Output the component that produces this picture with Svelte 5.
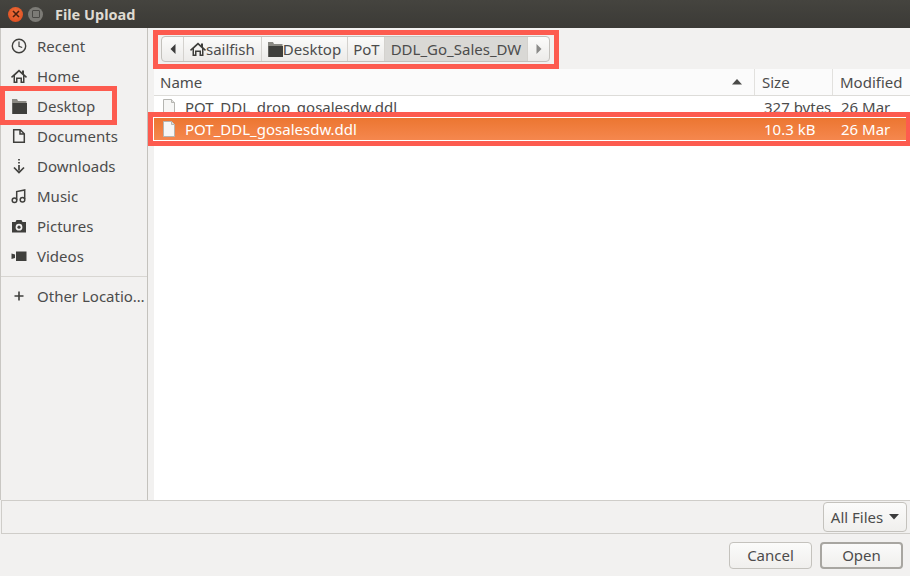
<script lang="ts">
  const places = [
    { name: 'Recent', icon: 'recent' },
    { name: 'Home', icon: 'home' },
    { name: 'Desktop', icon: 'folder' },
    { name: 'Documents', icon: 'doc' },
    { name: 'Downloads', icon: 'down' },
    { name: 'Music', icon: 'music' },
    { name: 'Pictures', icon: 'camera' },
    { name: 'Videos', icon: 'video' }
  ];
  const files = [
    { name: 'POT_DDL_drop_gosalesdw.ddl', size: '327 bytes', date: '26 Mar', selected: false },
    { name: 'POT_DDL_gosalesdw.ddl', size: '10.3 kB', date: '26 Mar', selected: true }
  ];
</script>

{#snippet glyph(icon: string)}
  <svg class="icon" width="16" height="16" viewBox="0 0 16 16">
    {#if icon === 'recent'}
      <circle cx="8" cy="8" r="6.7" fill="none" stroke="currentColor" stroke-width="1.4" />
      <path d="M8 3.500v4.800l3.200 1.200" fill="none" stroke="currentColor" stroke-width="1.2" />
    {:else if icon === 'home'}
      <path d="M8 1.500 0 8.800l1 1.100 1.500-1.300V15h4v-4h3v4h4V8.600L15 9.900l1-1.100-3-2.700V2.500h-2v1.800z M4 7.400 8 3.800l4 3.600v6.100h-1V9.500H5v4H4z" fill="currentColor" fill-rule="evenodd" />
    {:else if icon === 'folder'}
      <path d="M1 1h5l1 2h8.500v13H1z" fill="#8a8983" />
      <path d="M3 5h13v11H1.500V5z" fill="#3f3f3c" />
    {:else if icon === 'doc'}
      <path d="M2.700 1.700h6.500l4.100 4.100v8.500H2.700z M9 2v4h4" fill="none" stroke="currentColor" stroke-width="1.500" />
    {:else if icon === 'down'}
      <path d="M8 1v1.500M8 4v1.500M8 7v5.500M3 9.500 8 14.500l5-5" fill="none" stroke="currentColor" stroke-width="1.700" />
    {:else if icon === 'music'}
      <path d="M5.700 12V3.500l8-1.500v9" fill="none" stroke="currentColor" stroke-width="1.500" />
      <circle cx="3.500" cy="12.300" r="2.300" fill="none" stroke="currentColor" stroke-width="1.500" />
      <circle cx="11.500" cy="11.800" r="2.300" fill="none" stroke="currentColor" stroke-width="1.500" />
    {:else if icon === 'camera'}
      <path d="M1 4h3.500l1-2h5l1 2H15v10.500H1z M8 5.800a3.400 3.400 0 1 0 0 6.800 3.400 3.400 0 0 0 0-6.800z" fill="currentColor" fill-rule="evenodd" />
      <circle cx="8" cy="9.200" r="1.600" fill="currentColor" />
    {:else if icon === 'video'}
      <path d="M5 3.500h10.500v9.500H5z M.5 5.500l3.500 1v3.500l-3.500 1z" fill="currentColor" />
    {/if}
  </svg>
{/snippet}

{#snippet fileIcon()}
  <svg class="file-icon" width="16" height="16" viewBox="0 0 16 16">
    <path d="M2.500.5h8l3 3v12h-11z" fill="#f6f6f5" stroke="#b5b5b1" />
    <path d="M10.500.5v3h3" fill="#e2e2e0" stroke="#b5b5b1" />
  </svg>
{/snippet}

<div class="window">
  <header class="titlebar">
    <span class="btn-close">
      <svg width="8" height="8" viewBox="0 0 8 8"><path d="M1 1l6 6M7 1 1 7" stroke="#4a2010" stroke-width="1.600" /></svg>
    </span>
    <span class="btn-max"><span class="btn-max-inner"></span></span>
    <span class="title">File Upload</span>
  </header>

  <div class="main">
    <aside class="sidebar">
      <ul class="places">
        {#each places as p}
          <li class="place">
            {@render glyph(p.icon)}
            <span>{p.name}</span>
          </li>
        {/each}
      </ul>
      <div class="sep"></div>
      <div class="place other">
        <svg class="icon" width="16" height="16" viewBox="0 0 16 16"><path d="M8 3.500v9M3.500 8h9" stroke="currentColor" stroke-width="1.600" /></svg>
        <span>Other Locatio…</span>
      </div>
    </aside>

    <section class="content">
      <div class="pathbar">
        <div class="path-group">
          <span class="crumb arrow">
            <svg width="8" height="10" viewBox="0 0 8 10"><path d="M6.500 0v10L1.500 5z" fill="#3c3c3c" /></svg>
          </span>
          <span class="crumb home">
            <svg class="crumb-icon" width="16" height="16" viewBox="0 0 16 16"><path d="M8 1.500 0 8.800l1 1.100 1.500-1.300V15h4v-4h3v4h4V8.600L15 9.900l1-1.100-3-2.700V2.500h-2v1.800z M4 7.400 8 3.800l4 3.600v6.100h-1V9.500H5v4H4z" fill="#3d3d3a" fill-rule="evenodd" /></svg>sailfish
          </span>
          <span class="crumb">
            <svg class="crumb-icon" width="16" height="16" viewBox="0 0 16 16"><path d="M1 1h5l1 2h8.500v13H1z" fill="#8a8983" /><path d="M3 5h13v11H1.500V5z" fill="#3f3f3c" /></svg>Desktop
          </span>
          <span class="crumb pot">PoT</span>
          <span class="crumb active">DDL_Go_Sales_DW</span>
          <span class="crumb arrow end">
            <svg width="8" height="10" viewBox="0 0 8 10"><path d="M1.500 0v10l5-5z" fill="#8a8a88" /></svg>
          </span>
        </div>
      </div>

      <div class="list">
        <div class="list-head">
          <div class="th th-name">
            <span>Name</span>
            <svg width="10" height="6" viewBox="0 0 10 6"><path d="M5 0 10 5.500H0z" fill="#4a4a48" /></svg>
          </div>
          <div class="th th-size">Size</div>
          <div class="th th-mod">Modified</div>
        </div>
        {#each files as f}
          <div class="row" class:selected={f.selected}>
            <div class="cell-name">
              {@render fileIcon()}
              <span>{f.name}</span>
            </div>
            <div class="cell-size">{f.size}</div>
            <div class="cell-mod">{f.date}</div>
          </div>
        {/each}
      </div>
    </section>
  </div>

  <div class="filter-bar">
    <span class="button filter">All Files <svg width="10" height="6" viewBox="0 0 10 6"><path d="M0 0h10L5 5.500z" fill="#3c3c3c" /></svg></span>
  </div>

  <div class="actions">
    <span class="button">Cancel</span>
    <span class="button open">Open</span>
  </div>

  <div class="mark mark-desktop"></div>
  <div class="mark mark-path"></div>
  <div class="mark mark-file"></div>
</div>

<style>
  :global(body) {
    margin: 0;
    background: #f2f1f0;
  }

  .window {
    position: relative;
    width: 910px;
    height: 576px;
    overflow: hidden;
    display: flex;
    flex-direction: column;
    background: #f2f1f0;
    color: #4c4c4c;
    font-family: "Noto Sans", sans-serif;
    font-size: 15px;
  }

  .titlebar {
    height: 28px;
    flex: none;
    display: flex;
    align-items: center;
    padding-left: 8px;
    background: linear-gradient(#45443f, #3b3a36);
    box-sizing: border-box;
  }

  .btn-close {
    width: 15px;
    height: 15px;
    border-radius: 50%;
    background: radial-gradient(circle at 50% 40%, #f0703a, #d9471c);
    display: flex;
    align-items: center;
    justify-content: center;
  }

  .btn-max {
    width: 15px;
    height: 15px;
    margin-left: 5px;
    border-radius: 50%;
    background: #7c7b76;
    display: flex;
    align-items: center;
    justify-content: center;
  }

  .btn-max-inner {
    width: 6px;
    height: 6px;
    border: 1px solid #4b4a46;
    border-radius: 1px;
  }

  .title {
    margin-left: 12px;
    color: #dfdbd2;
    font-weight: 700;
    font-size: 14.500px;
  }

  .main {
    flex: 1;
    display: flex;
    min-height: 0;
    border-left: 1px solid #c9c7c3;
  }

  .sidebar {
    width: 146px;
    flex: none;
    border-right: 1px solid #c4c2bd;
    padding-top: 3px;
    box-sizing: content-box;
  }

  .places {
    list-style: none;
    margin: 0;
    padding: 0;
  }

  .place {
    height: 30px;
    display: flex;
    align-items: center;
    padding-left: 10px;
    white-space: nowrap;
  }

  .place .icon {
    flex: none;
    margin-right: 10px;
    color: #3f3f3c;
  }

  .sep {
    height: 1px;
    margin: 5px 0 0;
    background: #d8d6d2;
  }

  .other {
    margin-top: 4px;
  }

  .content {
    flex: 1;
    display: flex;
    flex-direction: column;
    min-width: 0;
  }

  .pathbar {
    height: 41px;
    flex: none;
    display: flex;
    align-items: center;
    padding-left: 13px;
    box-sizing: border-box;
  }

  .path-group {
    display: flex;
    height: 26px;
    box-sizing: border-box;
    border: 1px solid #c3c1bc;
    border-radius: 4px;
    overflow: hidden;
    background: linear-gradient(#fbfbfa, #ecebe9);
  }

  .crumb {
    display: flex;
    align-items: center;
    padding: 0 6px 0 5px;
    border-left: 1px solid #d4d2ce;
  }

  .crumb:first-child {
    border-left: 0;
  }

  .crumb.home {
    padding-left: 6px;
  }

  .crumb.pot {
    padding-right: 4px;
  }

  .crumb-icon {
    flex: none;
  }

  .crumb.arrow {
    width: 21px;
    padding: 0;
    justify-content: center;
  }

  .crumb.active {
    background: #d9d8d5;
    padding: 0 6px;
  }

  .list {
    flex: 1;
    margin-left: 6px;
    background: #fff;
  }

  .list-head {
    height: 27px;
    display: flex;
    background: #fbfbfb;
    border-bottom: 1px solid #dddcd9;
    box-sizing: border-box;
  }

  .th {
    display: flex;
    align-items: center;
    padding-left: 7px;
    box-sizing: border-box;
    border-right: 1px solid #e2e1de;
  }

  .th-name {
    width: 601px;
    padding-left: 6px;
    justify-content: space-between;
    padding-right: 12px;
  }

  .th-size {
    width: 78px;
  }

  .th-mod {
    flex: 1;
    border-right: 0;
  }

  .row {
    height: 22px;
    display: flex;
    align-items: center;
    box-sizing: border-box;
  }

  .row.selected {
    color: #fff;
    margin-left: -1px;
    padding-left: 1px;
    background: linear-gradient(#ec7631, #f5874e);
  }

  .cell-name {
    width: 601px;
    display: flex;
    align-items: center;
    padding-left: 7px;
    box-sizing: border-box;
  }

  .file-icon {
    flex: none;
    margin-right: 8px;
  }

  .cell-size {
    width: 78px;
    padding-left: 9px;
    box-sizing: border-box;
  }

  .cell-mod {
    flex: 1;
    padding-left: 8px;
  }

  .filter-bar {
    height: 34px;
    flex: none;
    display: flex;
    align-items: center;
    justify-content: flex-end;
    padding-right: 3px;
    border: 1px solid #cfcdc9;
    border-right: 0;
    box-sizing: border-box;
    margin-left: 1px;
  }

  .button {
    display: flex;
    align-items: center;
    justify-content: center;
    box-sizing: border-box;
    height: 27px;
    width: 83px;
    border: 1px solid #c4c2bd;
    border-radius: 4px;
    background: linear-gradient(#fbfbfa, #f0efed);
  }

  .filter {
    width: 84px;
    height: 30px;
    gap: 6px;
  }

  .actions {
    height: 42px;
    flex: none;
    display: flex;
    justify-content: flex-end;
    align-items: center;
    gap: 8px;
    padding-right: 7px;
    box-sizing: border-box;
  }

  .open {
    border: 2px solid #a8a6a1;
  }

  .mark {
    position: absolute;
    border: 5px solid #fd5b4f;
    box-sizing: border-box;
    pointer-events: none;
  }

  .mark-desktop {
    left: 0;
    top: 86px;
    width: 117px;
    height: 39px;
  }

  .mark-path {
    left: 153px;
    top: 30px;
    width: 406px;
    height: 39px;
  }

  .mark-file {
    left: 148px;
    top: 112px;
    width: 762px;
    height: 34px;
    border-right-width: 4px;
    box-shadow: inset 1px 0 #fff, inset 0 1px #fff, inset 0 -1px #fff;
  }
</style>
